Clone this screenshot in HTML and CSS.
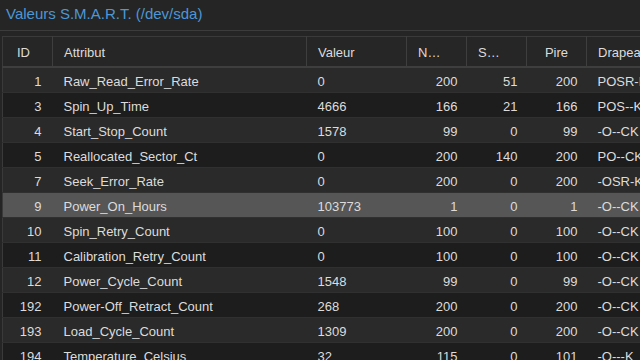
FILE: index.html
```html
<!DOCTYPE html>
<html>
<head>
    <title>Valeurs S.M.A.R.T.</title>
    <meta charset="utf-8">
    <link rel="stylesheet" href="styles.css">
</head>
<body>
    <div class="title">Valeurs S.M.A.R.T. (/dev/sda)</div>
    <div class="frame">
        <table class="smart">
            <colgroup>
                <col class="c-id"><col class="c-attr"><col class="c-val"><col class="c-num"><col class="c-num"><col class="c-num"><col class="c-flags">
            </colgroup>
            <thead>
                <tr>
                    <th class="h-id">ID</th>
                    <th>Attribut</th>
                    <th>Valeur</th>
                    <th>N…</th>
                    <th>S…</th>
                    <th class="h-center">Pire</th>
                    <th>Drapeaux</th>
                </tr>
            </thead>
            <tbody>
                <tr><td class="num">1</td><td>Raw_Read_Error_Rate</td><td>0</td><td class="num">200</td><td class="num">51</td><td class="num">200</td><td>POSR-K</td></tr>
                <tr><td class="num">3</td><td>Spin_Up_Time</td><td>4666</td><td class="num">166</td><td class="num">21</td><td class="num">166</td><td>POS--K</td></tr>
                <tr><td class="num">4</td><td>Start_Stop_Count</td><td>1578</td><td class="num">99</td><td class="num">0</td><td class="num">99</td><td>-O--CK</td></tr>
                <tr><td class="num">5</td><td>Reallocated_Sector_Ct</td><td>0</td><td class="num">200</td><td class="num">140</td><td class="num">200</td><td>PO--CK</td></tr>
                <tr><td class="num">7</td><td>Seek_Error_Rate</td><td>0</td><td class="num">200</td><td class="num">0</td><td class="num">200</td><td>-OSR-K</td></tr>
                <tr class="selected"><td class="num">9</td><td>Power_On_Hours</td><td>103773</td><td class="num">1</td><td class="num">0</td><td class="num">1</td><td>-O--CK</td></tr>
                <tr><td class="num">10</td><td>Spin_Retry_Count</td><td>0</td><td class="num">100</td><td class="num">0</td><td class="num">100</td><td>-O--CK</td></tr>
                <tr><td class="num">11</td><td>Calibration_Retry_Count</td><td>0</td><td class="num">100</td><td class="num">0</td><td class="num">100</td><td>-O--CK</td></tr>
                <tr><td class="num">12</td><td>Power_Cycle_Count</td><td>1548</td><td class="num">99</td><td class="num">0</td><td class="num">99</td><td>-O--CK</td></tr>
                <tr><td class="num">192</td><td>Power-Off_Retract_Count</td><td>268</td><td class="num">200</td><td class="num">0</td><td class="num">200</td><td>-O--CK</td></tr>
                <tr><td class="num">193</td><td>Load_Cycle_Count</td><td>1309</td><td class="num">200</td><td class="num">0</td><td class="num">200</td><td>-O--CK</td></tr>
                <tr><td class="num">194</td><td>Temperature_Celsius</td><td>32</td><td class="num">115</td><td class="num">0</td><td class="num">101</td><td>-O---K</td></tr>
            </tbody>
        </table>
    </div>
</body>
</html>
```

FILE: styles.css
```css
html, body {
    margin: 0;
    padding: 0;
    height: 100%;
    overflow: hidden;
}
body {
    background: #252525;
    color: #dcdcdc;
    font-family: "Liberation Sans", Arial, sans-serif;
    font-size: 13px;
}
.title {
    height: 31px;
    line-height: 27px;
    padding-left: 6px;
    color: #4c97d6;
    font-size: 15px;
    border-bottom: 1px solid #3c3c3c;
    box-sizing: border-box;
}
.frame {
    padding: 5px 0 0 2px;
}
.smart {
    table-layout: fixed;
    border-collapse: collapse;
    width: 720px;
    border-left: 1px solid #3a3a3a;
    border-top: 1px solid #3a3a3a;
}
.c-id { width: 50px; }
.c-attr { width: 254px; }
.c-val { width: 100px; }
.c-num { width: 60px; }
.c-flags { width: 136px; }
.smart th {
    height: 28px;
    padding: 1px 0 0 11px;
    text-align: left;
    font-weight: normal;
    color: #dcdcdc;
    background: #262626;
    border-right: 1px solid #3e3e3e;
    border-bottom: 2px solid #3e3e3e;
    white-space: nowrap;
    overflow: hidden;
}
.smart th.h-id {
    padding-left: 14px;
}
.smart th.h-center {
    text-align: center;
    padding-left: 0;
}
.smart td {
    height: 22px;
    padding: 2px 11px 0 11px;
    border-bottom: 1px solid #303030;
    white-space: nowrap;
    overflow: hidden;
}
.smart td.num {
    text-align: right;
    padding-right: 9px;
}
.smart td:first-child {
    padding-right: 11px;
}
.smart tbody tr:nth-child(odd) {
    background: #2a2a2a;
}
.smart tbody tr:nth-child(even) {
    background: #1d1d1d;
}
.smart tbody tr.selected {
    background: #565656;
}
```
